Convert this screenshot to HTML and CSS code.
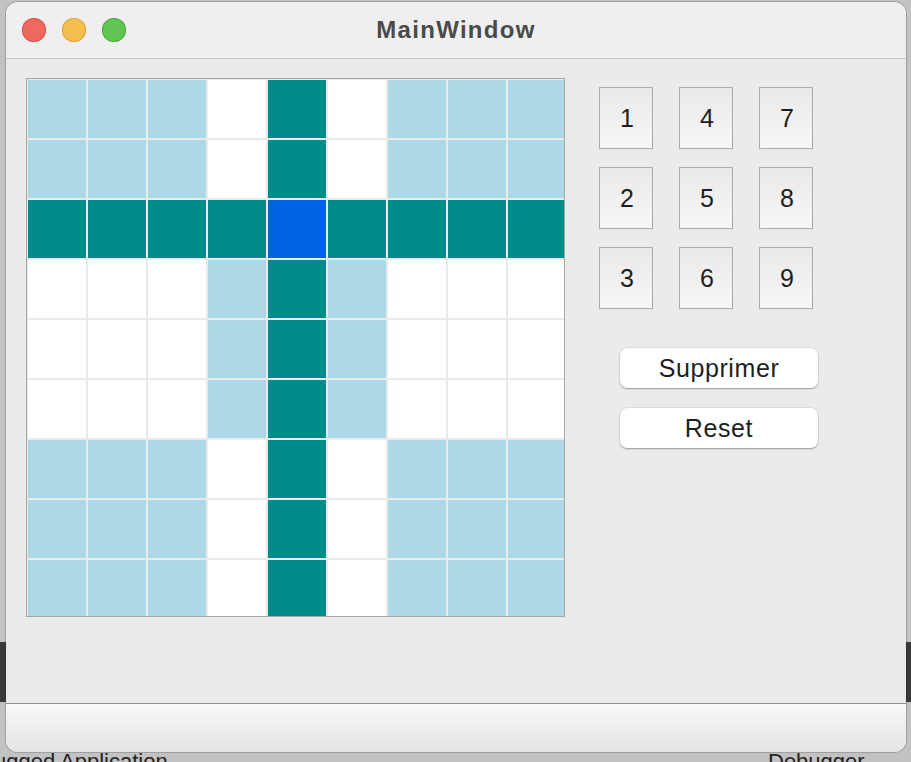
FILE: index.html
```html
<!DOCTYPE html>
<html lang="fr">
<head>
<meta charset="utf-8">
<title>MainWindow</title>
<link rel="stylesheet" href="styles.css">
</head>
<body>
<div class="desktop">
  <div class="bg-strip bg-strip-left"></div>
  <div class="bg-strip bg-strip-right"></div>
  <div class="bg-text bg-text-left">ugged Application</div>
  <div class="bg-text bg-text-right">Debugger</div>

  <div class="window">
    <div class="titlebar">
      <div class="lights">
        <span class="light red"></span>
        <span class="light yellow"></span>
        <span class="light green"></span>
      </div>
      <div class="title">MainWindow</div>
      <div class="spacer"></div>
    </div>

    <div class="content">
      <div class="board">
        <div class="cells">
          <div class="c lb"></div><div class="c lb"></div><div class="c lb"></div><div class="c w"></div><div class="c t"></div><div class="c w"></div><div class="c lb"></div><div class="c lb"></div><div class="c lb"></div>
          <div class="c lb"></div><div class="c lb"></div><div class="c lb"></div><div class="c w"></div><div class="c t"></div><div class="c w"></div><div class="c lb"></div><div class="c lb"></div><div class="c lb"></div>
          <div class="c t"></div><div class="c t"></div><div class="c t"></div><div class="c t"></div><div class="c sel"></div><div class="c t"></div><div class="c t"></div><div class="c t"></div><div class="c t"></div>
          <div class="c w"></div><div class="c w"></div><div class="c w"></div><div class="c lb"></div><div class="c t"></div><div class="c lb"></div><div class="c w"></div><div class="c w"></div><div class="c w"></div>
          <div class="c w"></div><div class="c w"></div><div class="c w"></div><div class="c lb"></div><div class="c t"></div><div class="c lb"></div><div class="c w"></div><div class="c w"></div><div class="c w"></div>
          <div class="c w"></div><div class="c w"></div><div class="c w"></div><div class="c lb"></div><div class="c t"></div><div class="c lb"></div><div class="c w"></div><div class="c w"></div><div class="c w"></div>
          <div class="c lb"></div><div class="c lb"></div><div class="c lb"></div><div class="c w"></div><div class="c t"></div><div class="c w"></div><div class="c lb"></div><div class="c lb"></div><div class="c lb"></div>
          <div class="c lb"></div><div class="c lb"></div><div class="c lb"></div><div class="c w"></div><div class="c t"></div><div class="c w"></div><div class="c lb"></div><div class="c lb"></div><div class="c lb"></div>
          <div class="c lb"></div><div class="c lb"></div><div class="c lb"></div><div class="c w"></div><div class="c t"></div><div class="c w"></div><div class="c lb"></div><div class="c lb"></div><div class="c lb"></div>
        </div>
      </div>

      <div class="panel">
        <div class="numpad">
          <button class="num">1</button>
          <button class="num">2</button>
          <button class="num">3</button>
          <button class="num">4</button>
          <button class="num">5</button>
          <button class="num">6</button>
          <button class="num">7</button>
          <button class="num">8</button>
          <button class="num">9</button>
        </div>
        <div class="actions">
          <button class="action">Supprimer</button>
          <button class="action">Reset</button>
        </div>
      </div>
    </div>

    <div class="statusbar"></div>
  </div>
</div>
</body>
</html>
```

FILE: styles.css
```css
* { box-sizing: border-box; }

html, body {
  margin: 0;
  padding: 0;
}

body {
  width: 911px;
  height: 762px;
  overflow: hidden;
  background: #c2c2c2;
  font-family: "Liberation Sans", Arial, sans-serif;
}

.desktop {
  position: relative;
  width: 911px;
  height: 762px;
  padding: 2px 0 0 6px;
}

.bg-strip {
  position: absolute;
  background: #3a3a3a;
  height: 60px;
  top: 642px;
}
.bg-strip-left { left: 0; width: 8px; }
.bg-strip-right { right: 0; width: 8px; }

.bg-text {
  position: absolute;
  top: 749px;
  font-size: 22px;
  line-height: 26px;
  color: #222;
  white-space: nowrap;
}
.bg-text-left { left: -6px; }
.bg-text-right { left: 768px; }

.window {
  position: relative;
  width: 900px;
  height: 750px;
  border-radius: 12px;
  overflow: hidden;
  background: #ebebeb;
  box-shadow: 0 0 0 1px rgba(0, 0, 0, 0.18);
  display: flex;
  flex-direction: column;
}

.titlebar {
  height: 57px;
  flex: none;
  background: #efefef;
  border-bottom: 1px solid #c6c6c6;
  display: grid;
  grid-template-columns: 1fr auto 1fr;
  align-items: center;
  padding: 0 16px;
}

.lights {
  display: flex;
  gap: 16px;
}

.light {
  width: 24px;
  height: 24px;
  border-radius: 50%;
  display: block;
}
.light.red { background: #ee6a5e; box-shadow: inset 0 0 0 1px #d9574c; }
.light.yellow { background: #f5bf4f; box-shadow: inset 0 0 0 1px #dea33a; }
.light.green { background: #61c554; box-shadow: inset 0 0 0 1px #4eac41; }

.title {
  font-weight: bold;
  font-size: 24px;
  letter-spacing: 1.3px;
  color: #4a4a4a;
  padding-bottom: 1px;
}

.content {
  flex: 1;
  display: flex;
  align-items: flex-start;
  padding: 19px 0 0 20px;
}

.board {
  width: 539px;
  height: 539px;
  border: 1px solid #a6a6a6;
  background: #eaeaea;
  overflow: hidden;
  flex: none;
}

.cells {
  display: grid;
  grid-template-columns: repeat(9, 58px);
  grid-template-rows: repeat(9, 58px);
  gap: 2px;
  padding: 1px;
  width: 540px;
}

.c { width: 58px; height: 58px; }
.c.lb { background: #add8e6; }
.c.w { background: #ffffff; }
.c.t { background: #008b8b; }
.c.sel { background: #0063e2; }

.panel {
  margin-left: 34px;
  margin-top: 9px;
  display: flex;
  flex-direction: column;
}

.numpad {
  display: grid;
  grid-template-columns: repeat(3, 54px);
  grid-template-rows: repeat(3, 62px);
  grid-auto-flow: column;
  column-gap: 26px;
  row-gap: 18px;
}

.num {
  border: 1px solid #ababab;
  background: linear-gradient(#e9e9e9, #f7f7f7);
  font-family: "Liberation Sans", Arial, sans-serif;
  font-size: 25px;
  color: #1e1e1e;
  padding: 0 0 0 2px;
  border-radius: 0;
}

.actions {
  margin-top: 39px;
  margin-left: 21px;
  display: flex;
  flex-direction: column;
  gap: 20px;
}

.action {
  width: 198px;
  height: 40px;
  border: none;
  border-radius: 7px;
  background: #ffffff;
  box-shadow: 0 0 0 0.5px rgba(0, 0, 0, 0.12), 0 1px 1.5px rgba(0, 0, 0, 0.3);
  font-family: "Liberation Sans", Arial, sans-serif;
  font-size: 25px;
  letter-spacing: 0.6px;
  color: #1e1e1e;
  padding: 0;
}

.statusbar {
  height: 49px;
  flex: none;
  border-top: 1px solid #8c8c8c;
  background: linear-gradient(#f8f8f8, #e4e4e4);
}
```
